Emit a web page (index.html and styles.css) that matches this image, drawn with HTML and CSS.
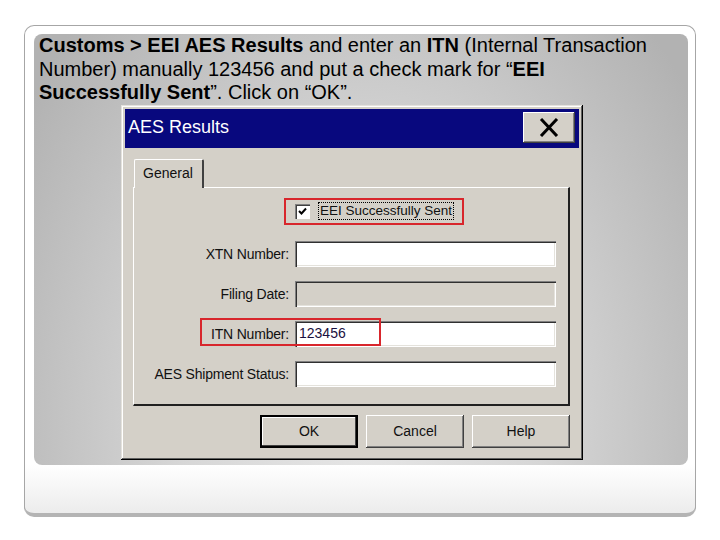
FILE: index.html
```html
<!DOCTYPE html>
<html lang="en">
<head>
    <meta charset="UTF-8">
    <meta name="viewport" content="width=device-width, initial-scale=1.0">
    <title>AES Results</title>
    <link rel="stylesheet" href="styles.css">
</head>
<body>
    <div class="slide">
        <div class="panel">
            <p class="caption"><b>Customs &gt; EEI AES Results</b> and enter an <b>ITN</b> (Internal Transaction<br>Number) manually 123456 and put a check mark for “<b>EEI</b><br><b>Successfully Sent</b>”. Click on “OK”.</p>

            <div class="dialog">
                <div class="titlebar">
                    <span class="title">AES Results</span>
                    <span class="close">
                        <svg width="20" height="19" viewBox="0 0 20 19">
                            <path d="M2 1 L18 18 M18 1 L2 18" stroke="#000" stroke-width="3" fill="none"/>
                        </svg>
                    </span>
                </div>

                <div class="dialog-body">
                    <div class="tabs">
                        <span class="tab">General</span>
                    </div>
                    <div class="tab-panel">
                        <div class="form">
                            <div class="check-row">
                                <span class="mark">
                                    <span class="checkbox">
                                        <svg width="9" height="9" viewBox="0 0 9 9">
                                            <path d="M1 4 L3.5 6.5 L8 1.5" stroke="#000" stroke-width="2" fill="none"/>
                                        </svg>
                                    </span>
                                    <span class="check-label">EEI Successfully Sent</span>
                                </span>
                            </div>

                            <label>XTN Number:</label>
                            <span class="field"></span>

                            <label>Filing Date:</label>
                            <span class="field disabled"></span>

                            <label>ITN Number:</label>
                            <span class="field">123456</span>

                            <label>AES Shipment Status:</label>
                            <span class="field"></span>

                            <span class="highlight"></span>
                        </div>
                    </div>
                    <div class="buttons">
                        <span class="btn default">OK</span>
                        <span class="btn">Cancel</span>
                        <span class="btn">Help</span>
                    </div>
                </div>
            </div>
        </div>
    </div>
</body>
</html>
```

FILE: styles.css
```css
body {
    margin: 0;
    background-color: #ffffff;
    font-family: "Liberation Sans", Arial, sans-serif;
}

.slide {
    box-sizing: border-box;
    margin: 25px 0 0 24px;
    width: 672px;
    height: 492px;
    padding: 8px 0 0 9px;
    border: 1px solid #a6a6a6;
    border-bottom: 4px solid #b4b4b4;
    border-radius: 10px;
    background: linear-gradient(to bottom, #ffffff 90%, #ececec 100%);
}

.panel {
    box-sizing: border-box;
    width: 654px;
    height: 431px;
    padding: 0 0 0 5px;
    border-radius: 8px;
    background: radial-gradient(ellipse 62% 130% at 50% 90%, #e6e6e6 0%, #d6d6d6 45%, #b2b2b2 100%);
}

.caption {
    margin: 0;
    font-size: 20px;
    line-height: 23.5px;
    color: #000000;
}

.dialog {
    box-sizing: border-box;
    width: 462px;
    height: 355px;
    margin: 0 0 0 82px;
    padding: 4px;
    background-color: #d4d0c8;
    box-shadow: inset -1px -1px #000000, inset 1px 1px #e4e2dc, inset -2px -2px #606060, inset 2px 2px #ffffff;
    font-family: "Liberation Sans", Tahoma, sans-serif;
    color: #111111;
}

.titlebar {
    display: flex;
    align-items: center;
    justify-content: space-between;
    height: 38px;
    padding: 0 4px 1px 3px;
    background-color: #08087e;
}

.title {
    color: #ffffff;
    font-size: 18px;
}

.close {
    box-sizing: border-box;
    display: flex;
    align-items: center;
    justify-content: center;
    width: 52px;
    height: 31px;
    background-color: #d4d0c8;
    box-shadow: inset -1px -1px #404040, inset 1px 1px #ffffff, inset -2px -2px #808080;
}

.dialog-body {
    padding: 11px 9px 0 8px;
}

.tabs {
    display: flex;
    padding-left: 1px;
}

.tab {
    box-sizing: border-box;
    position: relative;
    z-index: 1;
    height: 29px;
    margin-bottom: -1px;
    padding: 5px 9px 0 8px;
    font-size: 14px;
    background-color: #d4d0c8;
    border-top: 1px solid #ffffff;
    border-left: 1px solid #ffffff;
    border-right: 2px solid #404040;
    border-radius: 2px 2px 0 0;
}

.tab-panel {
    box-sizing: border-box;
    height: 219px;
    border-top: 1px solid #ffffff;
    border-left: 1px solid #ffffff;
    border-right: 2px solid #202020;
    border-bottom: 2px solid #202020;
}

.form {
    position: relative;
    display: grid;
    grid-template-columns: 1fr 261px;
    column-gap: 6px;
    row-gap: 14px;
    align-items: center;
    padding: 10px 12px 0 0;
}

.form label {
    text-align: right;
    font-size: 14px;
    letter-spacing: -0.2px;
}

.check-row {
    grid-column: 2;
    height: 27px;
    margin-bottom: 2px;
}

.mark {
    box-sizing: border-box;
    display: flex;
    align-items: center;
    width: 180px;
    height: 27px;
    margin-left: -11px;
    padding-left: 9px;
    border: 2px solid #d8262c;
}

.checkbox {
    box-sizing: border-box;
    display: flex;
    align-items: center;
    justify-content: center;
    width: 15px;
    height: 15px;
    background-color: #ffffff;
    box-shadow: inset 1px 1px #808080, inset 2px 2px #404040, inset -1px -1px #ffffff;
}

.check-label {
    margin-left: 8px;
    padding: 0 1px;
    font-size: 13.5px;
    line-height: 16px;
    border: 1px dotted #000000;
}

.field {
    box-sizing: border-box;
    display: block;
    height: 26px;
    padding: 4px 0 0 4px;
    font-size: 14px;
    color: #1a1040;
    background-color: #ffffff;
    box-shadow: inset 1px 1px #808080, inset 2px 2px #303030, inset -1px -1px #ffffff, inset -2px -2px #e4e2dc;
}

.field.disabled {
    background-color: #d4d0c8;
}

.highlight {
    position: absolute;
    left: 66px;
    top: 130px;
    width: 181px;
    height: 28px;
    box-sizing: border-box;
    border: 2px solid #d8262c;
}

.buttons {
    display: flex;
    justify-content: flex-end;
    gap: 8px;
    margin-top: 9px;
}

.btn {
    box-sizing: border-box;
    display: flex;
    align-items: center;
    justify-content: center;
    width: 98px;
    height: 33px;
    font-size: 14px;
    background-color: #d4d0c8;
    box-shadow: inset -1px -1px #404040, inset 1px 1px #ffffff, inset -2px -2px #808080;
}

.btn.default {
    border: 2px solid #000000;
    box-shadow: inset -1px -1px #404040, inset 1px 1px #ffffff;
}
```
